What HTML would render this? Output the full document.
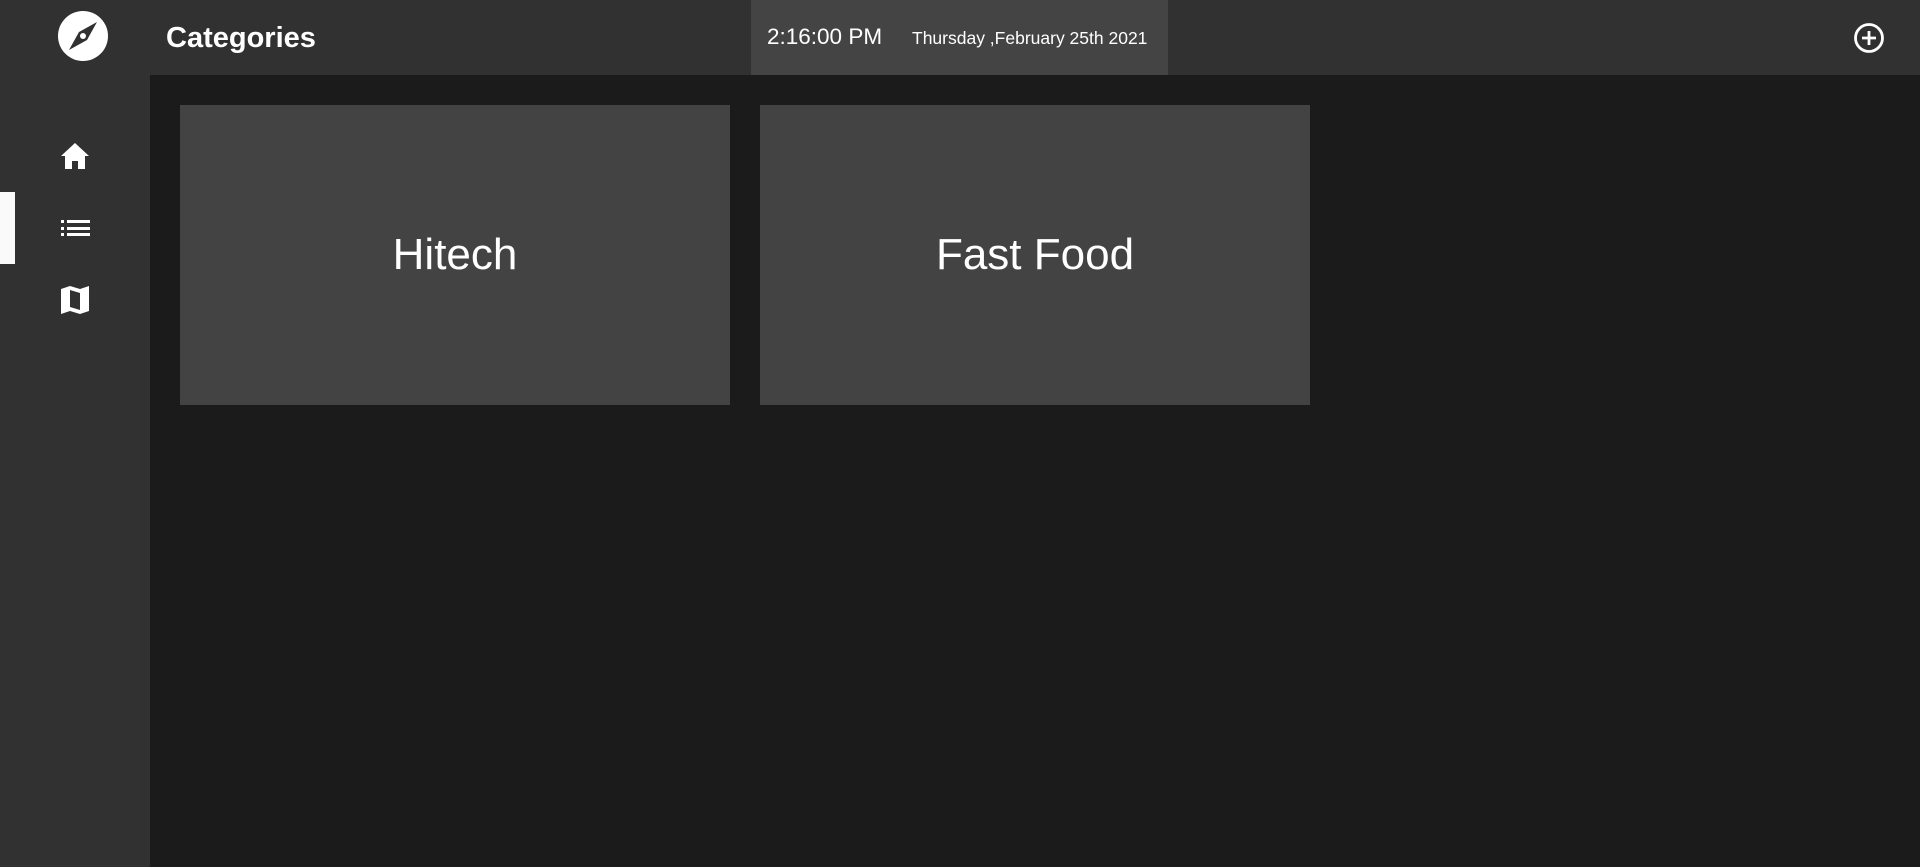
<!DOCTYPE html>
<html><head><meta charset="utf-8"><style>
*{margin:0;padding:0;box-sizing:border-box}
body{width:1920px;height:867px;background:#1b1b1b;font-family:"Liberation Sans",Arial,sans-serif;color:#fff;position:relative;overflow:hidden}
.side{position:absolute;left:0;top:0;width:150px;height:867px;background:#313131}
.top{position:absolute;left:0;top:0;width:1920px;height:75px;background:#313131}
.title{position:absolute;left:166px;top:22px;font-size:29px;font-weight:bold}
.tp{position:absolute;left:751px;top:0;width:417px;height:75px;background:#444}
.time{position:absolute;left:16px;top:24px;font-size:22.5px}
.date{position:absolute;left:161px;top:28px;font-size:17.5px}
.card{position:absolute;top:105px;width:550px;height:300px;background:#434343;font-size:44px;text-align:center;line-height:300px}
.ind{position:absolute;left:0;top:192px;width:15px;height:72px;background:#fafafa}
svg{position:absolute}
</style></head><body>
<div class="top"></div>
<div class="side"></div>
<div class="ind"></div>
<svg style="left:58px;top:11px" width="50" height="50" viewBox="0 0 50 50">
<circle cx="25" cy="25" r="25" fill="#fff"/>
<path d="M39 11 L29 29 L11 39 L21 21 Z" fill="#313131"/>
<circle cx="25" cy="25" r="3" fill="#fff"/>
</svg>
<svg style="left:60px;top:142px" width="30" height="28" viewBox="0 0 30 28">
<path d="M15 1 L1 14 H5 V27 H12 V19 H18 V27 H25 V14 H29 Z" fill="#fff"/>
</svg>
<svg style="left:61px;top:218px" width="29" height="20" viewBox="0 0 29 20">
<g fill="#fff"><rect x="0" y="2" width="3" height="3"/><rect x="0" y="9" width="3" height="3"/><rect x="0" y="15" width="3" height="3"/>
<rect x="6" y="2" width="23" height="3"/><rect x="6" y="9" width="23" height="3"/><rect x="6" y="15" width="23" height="3"/></g>
</svg>
<svg style="left:61px;top:285px" width="29" height="30" viewBox="0 0 29 30">
<path d="M0 4 L9 1 L19 4 L28 1 V26 L19 29 L9 26 L0 29 Z M9 5 V22 L19 25 V8 Z" fill="#fff" fill-rule="evenodd"/>
</svg>
<div class="title">Categories</div>
<div class="tp"><div class="time">2:16:00 PM</div><div class="date">Thursday ,February 25th 2021</div></div>
<svg style="left:1853px;top:22px" width="32" height="32" viewBox="0 0 32 32">
<circle cx="16" cy="16" r="13.5" fill="none" stroke="#fff" stroke-width="2.8"/>
<path d="M16 9 V23 M9 16 H23" stroke="#fff" stroke-width="2.8"/>
</svg>
<div class="card" style="left:180px">Hitech</div>
<div class="card" style="left:760px">Fast Food</div>
</body></html>
